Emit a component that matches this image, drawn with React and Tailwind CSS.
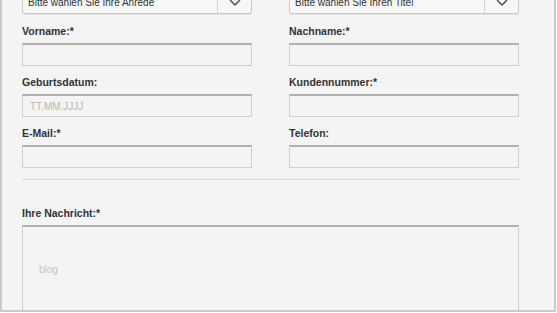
import React from 'react';

const font = { fontFamily: '"Liberation Sans", Arial, sans-serif' };

const Chevron = () => (
  <svg width="12" height="8" viewBox="0 0 12 8" fill="none">
    <path d="M1.5 1.5 L6 6 L10.5 1.5" stroke="#555" strokeWidth="1.6" strokeLinecap="round" strokeLinejoin="round" />
  </svg>
);

const Select = ({ text }) => (
  <div className="flex h-[23px] w-[230px] items-stretch rounded-b-[3px] border border-[#c9c9c9] bg-[#f7f7f7] shadow-[0_1px_0_#e2e2e2]">
    <div className="flex flex-1 items-center pl-[5px] text-[10px] text-[#333]">{text}</div>
    <div className="flex w-[34px] items-center justify-center border-l border-[#d4d4d4]">
      <Chevron />
    </div>
  </div>
);

const Field = ({ label, placeholder }) => (
  <div className="flex flex-col">
    <div className="mt-[10px] h-[12px] text-[10.5px] font-bold leading-[12px] text-[#333]">{label}</div>
    <div className="mt-[6px] flex h-[23px] w-[230px] items-center border border-[#cfcfcf] border-t-[#b0b0b0] border-t-2 bg-[#f4f4f4] pl-[7px] text-[10px] text-[#b5b5b5]">
      {placeholder}
    </div>
  </div>
);

export default function App() {
  return (
    <div className="h-[313px] w-[557px] overflow-hidden bg-white" style={font}>
      <div className="h-[312px] w-[556px] overflow-hidden border-b-2 border-l-2 border-r-2 border-[#cbcbcb] bg-[#f4f4f4] pl-[20px]">
        <div className="-mt-[9px] flex gap-[37px]">
          <Select text="Bitte wählen Sie Ihre Anrede" />
          <Select text="Bitte wählen Sie Ihren Titel" />
        </div>
        <div className="mt-[1px] grid w-[497px] grid-cols-[230px_230px] gap-x-[37px]">
          <Field label="Vorname:*" />
          <Field label="Nachname:*" />
          <Field label="Geburtsdatum:" placeholder="TT.MM.JJJJ" />
          <Field label="Kundennummer:*" />
          <Field label="E-Mail:*" />
          <Field label="Telefon:" />
        </div>
        <div className="mt-[11px] h-[2px] w-[497px] border-t border-[#d6d6d6] bg-[#fafafa]" />
        <div className="mt-[26px] h-[12px] text-[10.5px] font-bold leading-[12px] text-[#333]">Ihre Nachricht:*</div>
        <div className="mt-[6px] h-[120px] w-[497px] border border-[#cfcfcf] border-t-2 border-t-[#b0b0b0] bg-[#f4f4f4] pl-[16px] pt-[35px] text-[10px] text-[#c4c4c4]">
          blog
        </div>
      </div>
    </div>
  );
}
